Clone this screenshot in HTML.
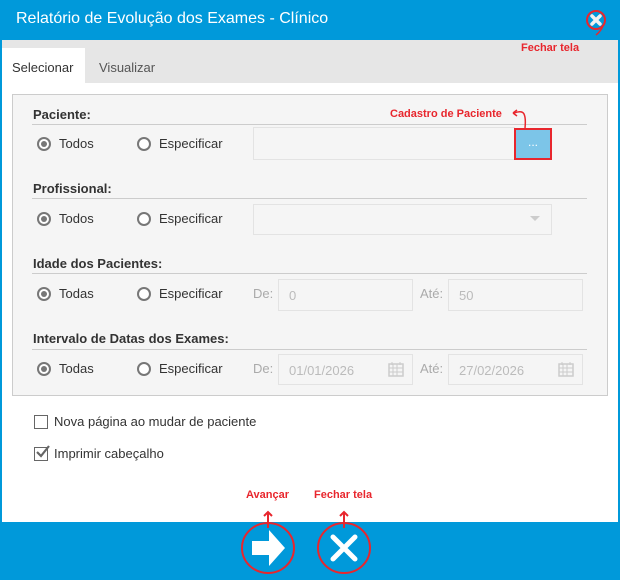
<!DOCTYPE html><html><head><meta charset="utf-8"><style>
*{margin:0;padding:0;box-sizing:border-box}
body{width:620px;height:580px;position:relative;overflow:hidden;font-family:"Liberation Sans",sans-serif;background:#fff;color:#333}
.a{position:absolute}
.lbl{font-size:13px;font-weight:bold;color:#333}
.ln{height:1px;background:#ccc;left:32px;width:555px}
.t{font-size:13px;color:#333}
.rad{width:14px;height:14px;border:2px solid #777;border-radius:50%;background:#fff}
.rad.on::after{content:"";position:absolute;left:2px;top:2px;width:6px;height:6px;border-radius:50%;background:#777}
.inp{background:#f5f5f5;border:1px solid #e3e3e3;font-size:13px;color:#bbb;padding:8px 10px}
.gr{color:#aaa;font-size:13px}
.red{color:#e8262d;font-weight:bold;font-size:11px}
.cb{width:14px;height:14px;border:1px solid #666;background:#fff}
</style></head><body>
<div class="a" style="left:0;top:0;width:620px;height:40px;background:#0099da"></div>
<div class="a" style="left:16px;top:10px;color:#fff;font-size:16px">Relatório de Evolução dos Exames - Clínico</div>
<svg class="a" style="left:584px;top:8px" width="26" height="28" viewBox="0 0 26 28"><circle cx="12" cy="12" r="9" fill="none" stroke="#e8262d" stroke-width="2"/><path d="M8 8l8 8M16 8l-8 8" stroke="#f0f0f0" stroke-width="3.5" stroke-linecap="round"/><path d="M19 18q-2 5-7 9" fill="none" stroke="#e8262d" stroke-width="1.5"/></svg>
<div class="a" style="left:0;top:40px;width:620px;height:482px;background:#fff;border-left:2px solid #0099da;border-right:2px solid #0099da"></div>
<div class="a" style="left:2px;top:40px;width:616px;height:43px;background:#e6e6e6"></div>
<div class="a" style="left:2px;top:48px;width:83px;height:35px;background:#fff"></div>
<div class="a t" style="left:12px;top:60px">Selecionar</div>
<div class="a t" style="left:99px;top:60px;color:#555">Visualizar</div>
<div class="a red" style="left:521px;top:42px">Fechar tela</div>
<div class="a" style="left:12px;top:94px;width:596px;height:302px;background:#f5f5f5;border:1px solid #ccc"></div>

<div class="a lbl" style="left:33px;top:107px">Paciente:</div>
<div class="a ln" style="top:124px"></div>
<div class="a red" style="left:390px;top:108px">Cadastro de Paciente</div>
<svg class="a" style="left:508px;top:106px" width="30" height="22"><path d="M6 7q8-3 10 1t1 14" fill="none" stroke="#e8262d" stroke-width="1.5"/><path d="M5 7l4-3M5 7l4 3" stroke="#e8262d" stroke-width="1.5"/></svg>
<div class="a rad on" style="left:37px;top:137px"></div><div class="a t" style="left:59px;top:136px">Todos</div>
<div class="a rad" style="left:137px;top:137px"></div><div class="a t" style="left:159px;top:136px">Especificar</div>
<div class="a inp" style="left:253px;top:127px;width:262px;height:33px"></div>
<div class="a" style="left:514px;top:128px;width:38px;height:32px;background:#7cc5e8;border:2px solid #e8262d;color:#fff;font-size:12px;text-align:center;line-height:24px">...</div>

<div class="a lbl" style="left:33px;top:181px">Profissional:</div>
<div class="a ln" style="top:198px"></div>
<div class="a rad on" style="left:37px;top:212px"></div><div class="a t" style="left:59px;top:211px">Todos</div>
<div class="a rad" style="left:137px;top:212px"></div><div class="a t" style="left:159px;top:211px">Especificar</div>
<div class="a inp" style="left:253px;top:204px;width:299px;height:31px"></div>
<div class="a" style="left:530px;top:216px;border:5px solid transparent;border-top-color:#ccc"></div>

<div class="a lbl" style="left:33px;top:256px">Idade dos Pacientes:</div>
<div class="a ln" style="top:273px"></div>
<div class="a rad on" style="left:37px;top:287px"></div><div class="a t" style="left:59px;top:286px">Todas</div>
<div class="a rad" style="left:137px;top:287px"></div><div class="a t" style="left:159px;top:286px">Especificar</div>
<div class="a gr" style="left:253px;top:286px">De:</div>
<div class="a inp" style="left:278px;top:279px;width:135px;height:32px">0</div>
<div class="a gr" style="left:420px;top:286px">Até:</div>
<div class="a inp" style="left:448px;top:279px;width:135px;height:32px">50</div>

<div class="a lbl" style="left:33px;top:331px">Intervalo de Datas dos Exames:</div>
<div class="a ln" style="top:349px"></div>
<div class="a rad on" style="left:37px;top:362px"></div><div class="a t" style="left:59px;top:361px">Todas</div>
<div class="a rad" style="left:137px;top:362px"></div><div class="a t" style="left:159px;top:361px">Especificar</div>
<div class="a gr" style="left:253px;top:361px">De:</div>
<div class="a inp" style="left:278px;top:354px;width:135px;height:31px">01/01/2026</div>
<div class="a gr" style="left:420px;top:361px">Até:</div>
<div class="a inp" style="left:448px;top:354px;width:135px;height:31px">27/02/2026</div>
<svg class="a" style="left:388px;top:361px" width="16" height="16"><rect x="1" y="3" width="14" height="12" fill="none" stroke="#ccc" stroke-width="1.5"/><path d="M1 7h14M5 3v12M9 3v12M1 11h14M4 1v3M12 1v3" stroke="#ccc"/></svg>
<svg class="a" style="left:558px;top:361px" width="16" height="16"><rect x="1" y="3" width="14" height="12" fill="none" stroke="#ccc" stroke-width="1.5"/><path d="M1 7h14M5 3v12M9 3v12M1 11h14M4 1v3M12 1v3" stroke="#ccc"/></svg>

<div class="a cb" style="left:34px;top:415px"></div><div class="a t" style="left:54px;top:414px">Nova página ao mudar de paciente</div>
<div class="a cb" style="left:34px;top:447px"></div>
<svg class="a" style="left:34px;top:444px" width="16" height="16"><path d="M3 8l4 4 8-10" fill="none" stroke="#666" stroke-width="2.2"/></svg>
<div class="a t" style="left:54px;top:446px">Imprimir cabeçalho</div>

<div class="a red" style="left:246px;top:489px">Avançar</div>
<div class="a red" style="left:314px;top:489px">Fechar tela</div>
<div class="a" style="left:0;top:522px;width:620px;height:58px;background:#0099da"></div>
<svg class="a" style="left:230px;top:505px" width="160" height="75">
<path d="M38 23v-16M34 11l4-4 4 4M114 23v-16M110 11l4-4 4 4" fill="none" stroke="#e8262d" stroke-width="2"/>
<ellipse cx="38" cy="43" rx="26" ry="25" fill="none" stroke="#e8262d" stroke-width="2"/>
<ellipse cx="114" cy="43" rx="26" ry="25" fill="none" stroke="#e8262d" stroke-width="2"/>
<path d="M22 36h17v-11l16 18-16 18v-11h-17z" fill="#fff"/>
<path d="M103 32l22 22M125 32l-22 22" stroke="#fff" stroke-width="5" stroke-linecap="round"/>
</svg>
</body></html>
